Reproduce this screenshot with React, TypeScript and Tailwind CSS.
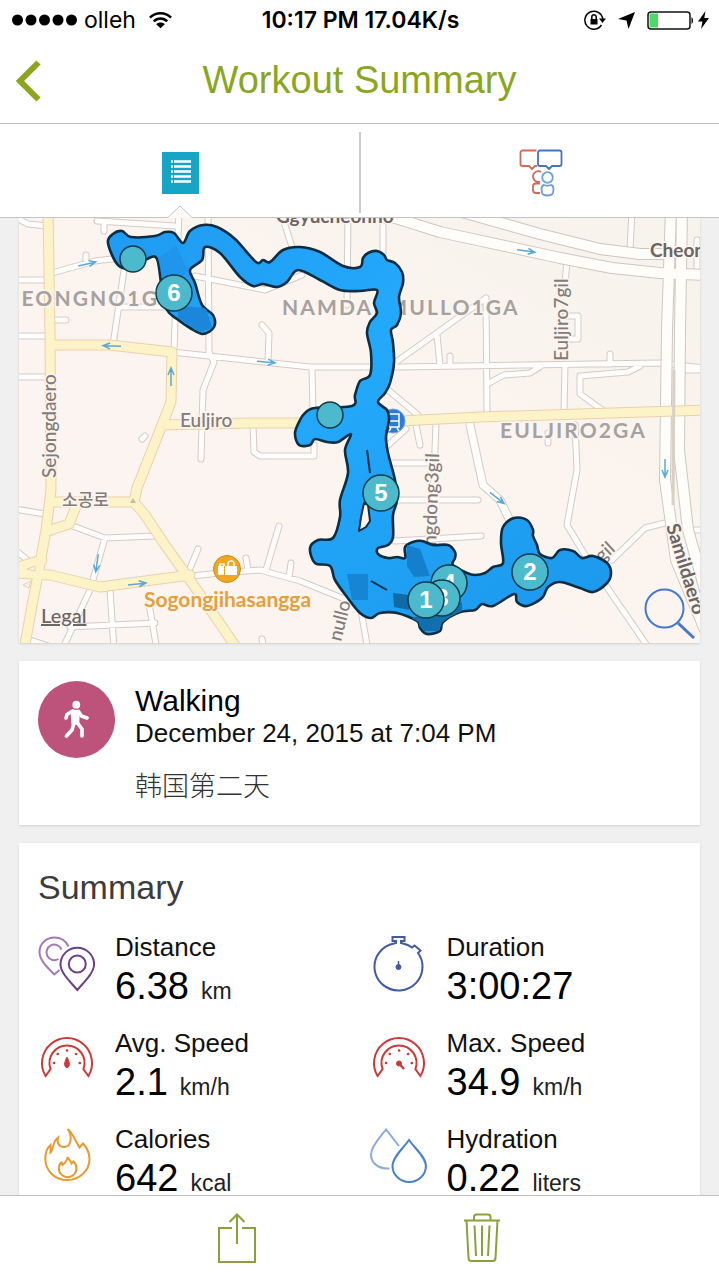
import React from 'react';

type Point = [number, number];

// Closed Catmull-Rom curve through every point
function closedCurve(pts: Point[]) {
  const n = pts.length;
  let d = `M${pts[0][0]} ${pts[0][1]}`;
  for (let i = 0; i < n; i++) {
    const a = pts[(i - 1 + n) % n];
    const b = pts[i];
    const c = pts[(i + 1) % n];
    const e = pts[(i + 2) % n];
    d += `C${b[0] + (c[0] - a[0]) / 6} ${b[1] + (c[1] - a[1]) / 6} ${c[0] - (e[0] - b[0]) / 6} ${c[1] - (e[1] - b[1]) / 6} ${c[0]} ${c[1]}`;
  }
  return d + 'Z';
}

const route: Point[] = [
  [108, 243], [113, 234], [122, 231], [131, 237], [155, 236], [165, 232], [174, 233], [183, 243], [190, 231], [203, 225],
  [217, 227], [235, 239], [256, 262], [263, 260], [270, 262], [283, 250], [300, 247], [320, 252], [343, 266], [360, 267],
  [363, 258], [368, 253], [377, 251], [384, 255], [387, 260], [395, 263], [402, 272], [403, 283], [399, 297], [401, 313],
  [397, 325], [391, 330], [393, 343], [394, 363], [390, 383], [385, 393], [378, 402], [387, 410], [389, 420], [386, 437],
  [388, 453], [395, 480], [397, 500], [393, 515], [393, 537], [388, 545], [378, 548], [378, 554], [388, 558], [397, 557],
  [405, 558], [405, 547], [413, 542], [422, 541], [433, 545], [448, 545], [455, 552], [455, 558], [453, 565], [467, 573],
  [475, 575], [485, 573], [493, 567], [503, 563], [501, 543], [503, 527], [514, 518], [527, 520], [533, 530], [533, 536],
  [537, 545], [540, 554], [552, 558], [560, 550], [573, 551], [582, 558], [593, 556], [607, 563], [611, 573], [607, 583],
  [593, 592], [580, 588], [560, 582], [548, 587], [542, 598], [527, 606], [517, 602], [514, 594], [493, 606], [482, 604],
  [475, 610], [460, 612], [443, 622], [440, 631], [427, 634], [420, 628], [417, 621], [397, 613], [380, 613], [371, 618],
  [360, 613], [347, 597], [335, 580], [330, 566], [315, 563], [310, 548], [318, 540], [333, 538], [340, 517], [340, 500],
  [348, 473], [345, 450], [351, 434], [338, 442], [327, 442], [315, 439], [310, 445], [299, 445], [295, 433], [300, 420],
  [305, 413], [315, 408], [352, 406], [355, 395], [360, 381], [370, 375], [371, 353], [367, 333], [370, 322], [377, 313],
  [374, 303], [377, 290], [360, 291], [340, 290], [320, 280], [298, 270], [287, 282], [277, 287], [263, 284], [253, 286],
  [240, 277], [220, 253], [205, 247], [202, 260], [190, 270], [195, 283], [202, 305], [213, 315], [214, 327], [203, 334],
  [190, 328], [177, 319], [167, 310], [162, 290], [157, 259], [147, 259], [133, 268], [118, 265],
];

const yellowRoads = [
  'M48 210L50 330L51 490L46 530L38 575L33 600L24 650',
  'M50 345H110L172 352',
  'M172 352L171 402L160 430L137 488L134 502L145 515L165 545L190 580L238 650',
  'M162 425L250 423H360L480 417L705 410',
  'M51 502H132',
  'M77 504L69 524L48 531',
  'M15 573L50 575L100 587L190 575',
  'M15 568L42 560',
];

const wideRoads = [
  'M370 210L440 232L560 258L612 268L660 273L705 275',
  'M455 210L540 234L600 249L640 254H668',
  'M671 210L667 330L665 480L676 560L705 630',
  'M682 210L680 330L679 450L688 530L705 590',
];

const midStreets = ['M470 425L483 485L500 500L512 525'];

const streets = [
  'M15 280H48', 'M15 336H50', 'M15 377H50', 'M15 217L28 224L48 226', 'M52 320H66',
  'M52 273L95 261L120 258', 'M86 260V255', 'M97 221L175 226', 'M104 224V231', 'M124 270L113 345', 'M120 307H165',
  'M179 210L174 352', 'M208 210L209 352L214 362L203 390L201 459', 'M172 352L310 367L400 367L660 363L705 368',
  'M195 276L265 290L302 275', 'M262 325L269 333L268 362', 'M312 369L313 412', 'M348 210L347 305',
  'M383 226V255', 'M284 222L293 250', 'M632 210L630 250', 'M396 362L486 298', 'M486 298L487 412', 'M437 335L440 365',
  'M450 364V356', 'M565 365L564 412', 'M567 260L565 284', 'M610 364V354', 'M489 383L504 375L530 373L541 366',
  'M640 366L628 372L580 376V394L605 412', 'M388 390L418 415', 'M565 316H578V339H567', 'M683 370H705', 'M697 240V275',
  'M386 447L406 429', 'M416 425L420 445', 'M436 425L431 545', 'M393 463H428', 'M398 500H478', 'M395 541L481 536',
  'M548 433V443', 'M575 425L577 470L567 525L585 555L650 650', 'M612 560L645 528L665 523', 'M686 530H705',
  'M15 509L45 514', 'M70 525L105 538L155 536', 'M105 538L90 590L62 650', 'M70 627L155 623', 'M110 590L114 650',
  'M149 604L157 650', 'M192 576L220 573L260 570L300 581L352 602', 'M188 573L198 549', 'M266 570L279 526',
  'M248 570L246 558', 'M289 578L291 563', 'M253 425L254 452L260 456H314V445', 'M264 650L262 639',
  'M360 605L368 650', 'M15 550L30 562', 'M24 638L60 650', 'M142 439L145 436',
];

const arrows = [
  { x: 87, y: 264, deg: -13 }, { x: 112, y: 346, deg: 182 }, { x: 171, y: 377, deg: -90 }, { x: 266, y: 362, deg: 5 },
  { x: 526, y: 251, deg: 8 }, { x: 97, y: 563, deg: 98 }, { x: 137, y: 584, deg: -6 }, { x: 497, y: 498, deg: 38 },
  { x: 665, y: 468, deg: 90 },
];

function Roads({ paths, width, line, fill }: { paths: string[]; width: number; line: string; fill: string }) {
  const d = paths.join('');
  return (
    <g fill="none" strokeLinecap="round" strokeLinejoin="round">
      <path d={d} stroke={line} strokeWidth={width + 2} />
      <path d={d} stroke={fill} strokeWidth={width} />
    </g>
  );
}

function Marker({ x, y, label }: { x: number; y: number; label?: string }) {
  return (
    <g>
      <circle cx={x} cy={y} r={label ? 18 : 13} fill="#4cb9cd" stroke="#123c49" strokeWidth="1.5" />
      {label && (
        <text x={x} y={y + 8} textAnchor="middle" fill="#fff" className="font-['Liberation_Sans',sans-serif] text-[24px] font-bold">
          {label}
        </text>
      )}
    </g>
  );
}

function RouteMap() {
  const outline = closedCurve(route);
  return (
    <svg viewBox="19 218 681 425" className="block w-full h-auto" role="img" aria-label="Route map">
      <defs>
        <linearGradient id="land" x1="0" y1="1" x2="1" y2="0">
          <stop offset="0" stopColor="#fcf4f0" />
          <stop offset="0.6" stopColor="#fbf4ef" />
          <stop offset="1" stopColor="#f6f3ec" />
        </linearGradient>
        <linearGradient id="route" x1="0" y1="0" x2="1" y2="1">
          <stop offset="0" stopColor="#1f9bf2" />
          <stop offset="0.4" stopColor="#23a9fb" />
          <stop offset="1" stopColor="#1b98ec" />
        </linearGradient>
        <clipPath id="routeClip">
          <path d={outline} />
        </clipPath>
      </defs>
      <rect x="19" y="218" width="681" height="425" fill="url(#land)" />

      <Roads paths={streets} width={5} line="#d3cbc7" fill="#fffdfb" />
      <Roads paths={midStreets} width={7} line="#d3cbc7" fill="#fffdfb" />
      <Roads paths={wideRoads} width={10} line="#cdc7c1" fill="#fffdf9" />
      <Roads paths={yellowRoads} width={9} line="#ecd0ab" fill="#fdf3c8" />
      <path d="M674 370L673 505" stroke="#d8cfc6" strokeWidth="3" />
      <path d="M130 503L133 498L136 503Z" fill="#c9bd9e" />
      <path d="M27 569L35 566V571ZM23 585L31 581L29 588Z" fill="#fcf4ef" stroke="#ecd0ab" />

      <g stroke="#58a9d6" strokeWidth="1.5" fill="none">
        {arrows.map((a) => (
          <path key={`${a.x}-${a.y}`} d="M-9 0H8M2 -3L9 0L2 3" transform={`translate(${a.x} ${a.y}) rotate(${a.deg})`} />
        ))}
      </g>

      <g className="font-[Lato,sans-serif] text-[21px] font-bold tracking-widest" fill="#a5a1a0" stroke="#fbf4ef" strokeWidth="3" paintOrder="stroke">
        <text x="159" y="306" textAnchor="end">EONGNO1G</text>
        <text x="282" y="315">NAMDAEMULLO1GA</text>
        <text x="500" y="438">EULJIRO2GA</text>
      </g>
      <g className="font-[Lato,sans-serif] text-[19px] font-medium" fill="#817b79" stroke="#fbf4ef" strokeWidth="3" paintOrder="stroke">
        <text x="180" y="427">Euljiro</text>
        <text transform="translate(56 478) rotate(-90)">Sejongdaero</text>
        <text transform="translate(568 361) rotate(-90)">Euljiro7gil</text>
        <text transform="translate(436 546) rotate(-88)">ngdong3gil</text>
        <text transform="translate(341 642) rotate(-76)">nullo</text>
        <text transform="translate(602 563) rotate(-42)">gil</text>
        <text x="62" y="506" className="font-['Noto_Sans_CJK_KR',sans-serif] text-[17px]">소공로</text>
      </g>
      <g className="font-[Lato,sans-serif] text-[19px] font-bold" fill="#6b6564" stroke="#fbf4ef" strokeWidth="3" paintOrder="stroke">
        <text x="276" y="223">Ggyucheonno</text>
        <text x="650" y="257">Cheonggye</text>
        <text transform="translate(666 526) rotate(73)">Samildaero</text>
        <text x="144" y="607" fill="#e5a03a" className="text-[21px]">Sogongjihasangga</text>
      </g>

      <circle cx="227" cy="569" r="13.5" fill="#f0a822" stroke="#c98b1c" />
      <path d="M218 566h6v9h-5l-1-1zM225 566h12v9h-12z" fill="#fff" />
      <path d="M228 567v-3a3 3 0 0 1 6 0v3M220 566v-2h4v2" fill="none" stroke="#fff" strokeWidth="1.5" />
      <circle cx="393" cy="421" r="12" fill="#2a7bdc" stroke="#6ea5e6" />
      <path d="M389 414h10v13h-10zM391 428l-2 3M397 428l2 3M389 421h10" fill="none" stroke="#fff" strokeWidth="1.5" />

      <path d={outline} fill="url(#route)" stroke="#0d2d42" strokeWidth="2.6" strokeLinejoin="round" />
      <g clipPath="url(#routeClip)">
        <path d="M407 545L420 549L430 576L414 577L407 566Z" fill="#1480cd" />
        <path d="M347 574H368V600H352Z" fill="#1685d4" />
        <path d="M393 593L409 595V610L394 607Z" fill="#0f6ba8" />
        <path d="M412 618L462 602V613L443 622L438 631H424Z" fill="#126fae" />
        <path d="M158 258L176 246L188 270L176 285L164 290Z" fill="#1d8be2" opacity="0.5" />
        <path d="M178 306L206 308L212 328L200 332L178 318Z" fill="#1c86da" />
      </g>
      <path d="M370 473L367 450M371 581L387 590" fill="none" stroke="#0d2d42" strokeWidth="2" />
      <path d="M364 503L368 505L370 521L366 527L359 531L361 517Z" fill="#fbf4ef" stroke="#0d2d42" strokeWidth="2" strokeLinejoin="round" />

      <Marker x={133} y={259} />
      <Marker x={330} y={415} />
      <Marker x={174} y={293} label="6" />
      <Marker x={381} y={493} label="5" />
      <Marker x={530} y={572} label="2" />
      <Marker x={449} y={583} label="4" />
      <Marker x={442} y={598} label="3" />
      <Marker x={426} y={600} label="1" />
    </svg>
  );
}

function StatusBar() {
  return (
    <div className="flex h-10 items-center justify-between px-3 font-[Inter,sans-serif] text-[23px] text-black">
      <div className="flex flex-1 items-center">
        <svg width="66" height="12" viewBox="0 0 66 12">
          {[5.5, 19, 32.5, 46, 59.5].map((cx) => (
            <circle key={cx} cx={cx} cy="6" r="5.5" />
          ))}
        </svg>
        <span className="ml-1.5">olleh</span>
        <svg className="ml-3" width="25" height="18" viewBox="0 0 26 18" fill="none" stroke="#000" strokeWidth="2.6">
          <path d="M2 6.5C8 .5 18 .5 24 6.5M6 10.5C10 6.5 16 6.5 20 10.5" />
          <path d="M8.500 13.300C11 11.200 15 11.200 17.500 13.300L13 17.500Z" fill="#000" stroke="none" />
        </svg>
      </div>
      <div className="font-semibold">10:17 PM 17.04K/s</div>
      <div className="flex flex-1 items-center justify-end gap-3 -mr-0.5">
        <svg width="22" height="20" viewBox="0 0 22 20" fill="none" stroke="#000" strokeWidth="1.5">
          <path d="M17.5 15A9 9 0 1 1 18.8 9" />
          <path d="M15 8.5H22L18.5 13Z" fill="#000" stroke="none" />
          <path d="M6.5 9H13.5V14.5H6.5Z" fill="#000" stroke="none" />
          <path d="M7.8 9.5V7a2.2 2.2 0 0 1 4.4 0V9.5" />
        </svg>
        <svg width="17" height="17" viewBox="0 0 17 17">
          <path d="M17 0L10.5 17L8.5 8.5L0 7Z" />
        </svg>
        <div className="flex items-center gap-1">
          <svg width="47" height="19" viewBox="0 0 47 19">
            <rect x="1" y="1" width="42" height="17" rx="3" fill="#fff" stroke="#111" strokeWidth="1.5" />
            <path d="M2.5 2.5H11V16.5H2.5Z" fill="#4cd964" />
            <path d="M44.5 6a3 4 0 0 1 0 7Z" />
          </svg>
          <svg width="11" height="18" viewBox="0 0 11 18">
            <path d="M7.5 0L0 10.5H4.5L3 18L11 7H6.3Z" />
          </svg>
        </div>
      </div>
    </div>
  );
}

function Header() {
  return (
    <header className="relative flex h-[84px] items-center justify-center border-b border-[#b9bcbd] pb-1">
      <button type="button" aria-label="Back" className="absolute left-4 top-5">
        <svg width="26" height="42" viewBox="0 0 26 42" fill="none" stroke="#8aa61f" strokeWidth="6">
          <path d="M22.5 2.5L4 21L22.5 39.5" />
        </svg>
      </button>
      <h1 className="text-[38px] leading-[44px] text-[#8aa61f]">Workout Summary</h1>
    </header>
  );
}

function Tabs() {
  return (
    <nav className="relative z-10 flex h-[94px] items-stretch border-b border-[#c4c6c6] bg-white">
      <button type="button" aria-label="Details" className="flex flex-1 items-center justify-center pt-1 pl-0.5">
        <svg width="37" height="42" viewBox="0 0 37 42">
          <path d="M0 0H37V42H0Z" fill="#16a5c6" />
          <path d="M9 9.5H11M9 14.5H11M9 19.5H11M9 24.5H11M9 29.5H11M12 9.5H29M12 14.5H29M12 19.5H29M12 24.5H29M12 29.5H29" stroke="#fff" strokeWidth="2.5" />
        </svg>
      </button>
      <span className="mt-2 mb-1 w-0.5 bg-[#c9cacc]" />
      <button type="button" aria-label="Social" className="flex flex-1 items-center justify-center pt-1 pl-0.5">
        <svg width="44" height="48" viewBox="0 0 44 48" fill="none" strokeWidth="1.8" strokeLinejoin="round">
          <g stroke="#cf6b5c">
            <path d="M17.5 1.5H3.5a2 2 0 0 0-2 2V15a2 2 0 0 0 2 2H10l3 3 3-3H18" />
            <path d="M22 23a5.300 5.300 0 1 0-1 9.500M21 34.500H17a3 3 0 0 0-3 3V41a3 3 0 0 0 3 3h4" />
          </g>
          <path d="M21 1.5H40.5a2 2 0 0 1 2 2V15a2 2 0 0 1-2 2H33l-3 3-3-3H21a2 2 0 0 1-2-2V3.5a2 2 0 0 1 2-2Z" stroke="#4672c4" />
          <g stroke="#6f9fe0">
            <circle cx="28.5" cy="28.5" r="5.3" />
            <path d="M25 36Q28.500 37.500 32 36Q34.500 36.500 34.500 40L34 43.500Q33.500 46.500 28.500 46.500Q23.500 46.500 23 43.500L22.500 40Q22.500 36.500 25 36Z" />
          </g>
        </svg>
      </button>
      {/* Pointer under the active tab */}
      <svg className="absolute -bottom-px left-1/4 -translate-x-1/2" width="26" height="13" viewBox="0 0 26 13">
        <path d="M0 13L13 1L26 13Z" fill="#fdf9f7" />
        <path d="M0 12.5H1L13 1L25 12.5H26" fill="none" stroke="#c4c6c6" />
      </svg>
    </nav>
  );
}

const icons: Record<string, React.ReactNode> = {
  distance: (
    <>
      <path d="M30.5 11.5C28 6 23 2.5 16.3 2.5C8 2.5 1.5 9 1.5 17C1.5 25 9 32 16.3 39.5L21.5 35" stroke="#a27bb6" />
      <path d="M23.5 14.5A7.8 7.8 0 1 0 20.5 24" stroke="#a27bb6" />
      <path d="M39.3 55C33 47.5 22.5 38 22.5 29.5a16.8 16.8 0 0 1 33.6 0C56.1 38 45.5 47.5 39.3 55Z" stroke="#6e3f8c" />
      <circle cx="39.3" cy="29" r="8.5" stroke="#6e3f8c" />
    </>
  ),
  duration: (
    <g stroke="#4259a3">
      <path d="M24 8.5L26 8V6H22.5V2H34.5V6H31V8L33 8.5Q38 9.5 42 12.500L44.500 10.500L50.500 15.500L48 18Q52.500 24 52.500 31.500A24 23.700 0 1 1 24 8.500" />
      <circle cx="28.5" cy="32" r="2.5" fill="#4259a3" strokeWidth="1" />
      <path d="M28.5 32V26" strokeWidth="1.5" />
    </g>
  ),
  avg: (
    <g stroke="#cc3a38">
      <path d="M7.6 45A25 25 0 1 1 50.4 45L45.4 38A17.5 17.5 0 1 0 12.6 38Z" />
      <path d="M16 32h.1M19.7 23h.1M29 19.5h.1M38 23h.1M41.7 32h.1" strokeWidth="2.6" strokeLinecap="round" />
      <path d="M28.5 26.5h1L31 31a2.5 3.5 0 1 1-4 0Z" fill="#cc3a38" strokeWidth="1" />
    </g>
  ),
  max: (
    <g stroke="#cc3a38">
      <path d="M7.6 45A25 25 0 1 1 50.4 45L45.4 38A17.5 17.5 0 1 0 12.6 38Z" />
      <path d="M16 32h.1M19.7 23h.1M29 19.5h.1M38 23h.1M41.7 32h.1" strokeWidth="2.6" strokeLinecap="round" />
      <circle cx="29" cy="32.5" r="2.5" fill="#cc3a38" strokeWidth="1" />
      <path d="M29 32.5L34 38" strokeWidth="2.5" />
    </g>
  ),
  calories: (
    <g stroke="#e99a30">
      <path d="M29.7 2C34 5 37 13 41.5 20.5L45 16.5C49 21 51.5 26 51.5 32C51.5 44 41 53 29.3 53C17 53 7.3 44 7.3 31.5C7.3 26 9 21 12.5 18V25.5C16 22 14 15 20 10.5C18.5 16 21 20 26 20C33.5 20 34.5 9 29.7 2Z" />
      <path d="M29.5 30C30.5 32.5 33 34 33.5 36.5L35.5 34.5C38 37 38.5 39 38.3 41a8.7 8.3 0 1 1-17.3 0c0-3 1.5-5 2.5-5.5l1 2.5C27 36 29.5 34 29.5 30Z" />
    </g>
  ),
  hydration: (
    <>
      <path d="M29 19L16 2.5C11 9 1 19 1 27.5C1 36 8 42 19.5 41.5" stroke="#8fabdc" />
      <path d="M39 13C34 20.5 22.5 30 22.5 39a16.7 16 0 0 0 33.4 0C56 30 44 20.5 39 13Z" stroke="#4a80cd" />
    </>
  ),
};

const stats = [
  { icon: 'distance', label: 'Distance', value: '6.38', unit: 'km' },
  { icon: 'duration', label: 'Duration', value: '3:00:27' },
  { icon: 'avg', label: 'Avg. Speed', value: '2.1', unit: 'km/h' },
  { icon: 'max', label: 'Max. Speed', value: '34.9', unit: 'km/h' },
  { icon: 'calories', label: 'Calories', value: '642', unit: 'kcal' },
  { icon: 'hydration', label: 'Hydration', value: '0.22', unit: 'liters' },
];

export default function App() {
  return (
    <div className="flex h-screen flex-col bg-white font-['Liberation_Sans','Noto_Sans_CJK_SC',sans-serif] text-[#111]">
      <StatusBar />
      <Header />
      <Tabs />

      <main className="min-h-0 flex-1 space-y-[18px] overflow-y-auto bg-[#f1f0f1] px-[19px] [scrollbar-width:none]">
        <section className="relative overflow-hidden shadow-sm">
          <RouteMap />
          <a href="#legal" className="absolute bottom-4 left-[22px] font-[Lato,sans-serif] text-[20px] leading-6 font-medium text-[#6b6564] underline">Legal</a>
          <button type="button" aria-label="Zoom map" className="absolute right-1 bottom-1">
            <svg width="52" height="52" viewBox="0 0 52 52" fill="none" stroke="#4577d2" strokeWidth="2">
              <circle cx="20.5" cy="21.5" r="19" />
              <path d="M34 36L50 51" strokeWidth="3" />
            </svg>
          </button>
        </section>

        <section className="flex gap-5 bg-white px-[19px] pt-5 pb-[22px] shadow-sm">
          <svg className="shrink-0" width="77" height="77" viewBox="0 0 77 77">
            <circle cx="38.5" cy="38.5" r="38.5" fill="#bd527a" />
            <circle cx="38.3" cy="23.7" r="3.9" fill="#fff" />
            <g fill="none" stroke="#fff" strokeWidth="3.6" strokeLinecap="round" strokeLinejoin="round">
              <path d="M34.5 30L29 33.5L28 37M40.5 30.500L43.500 35L49 37M36 42L34 49L28.500 55M39.500 42L44 48V55" />
              <path d="M34.5 30.5H40L39.5 42H35Z" fill="#fff" />
            </g>
          </svg>
          <div className="pt-1">
            <h2 className="text-[30px] leading-8 text-black">Walking</h2>
            <p className="text-[26px] leading-8">December 24, 2015 at 7:04 PM</p>
            <p className="mt-[22px] text-[27px] leading-8 font-light text-[#333]">韩国第二天</p>
          </div>
        </section>

        <section className="bg-white px-[19px] pt-6 pb-5 shadow-sm">
          <h2 className="text-[34px] leading-10 text-[#3c3c3c]">Summary</h2>
          <dl className="mt-6 grid grid-cols-2 gap-x-5 gap-y-[18px]">
            {stats.map((s) => (
              <div key={s.label} className="flex gap-5">
                <svg className="mt-1 shrink-0" width="57" height="57" viewBox="0 0 57 57" fill="none" strokeWidth="2">
                  {icons[s.icon]}
                </svg>
                <div>
                  <dt className="text-[26px] leading-8">{s.label}</dt>
                  <dd className="flex h-[46px] items-baseline gap-3 text-[38px] leading-[46px] text-black">
                    {s.value}
                    {s.unit && <span className="text-[23px] leading-none text-[#222]">{s.unit}</span>}
                  </dd>
                </div>
              </div>
            ))}
          </dl>
        </section>
      </main>

      <footer className="h-[85px] border-t border-[#bfc0c2] bg-white">
        <div className="mx-auto grid h-full w-[68%] grid-cols-2 place-items-center">
          <button type="button" aria-label="Share">
            <svg width="38" height="50" viewBox="0 0 38 50" fill="none" stroke="#8aa03a" strokeWidth="2">
              <path d="M14 15H1V49H37V15H24M19 1.5V31M11.5 9L19 1.5L26.5 9" />
            </svg>
          </button>
          <button type="button" aria-label="Delete">
            <svg width="36" height="50" viewBox="0 0 36 50" fill="none" stroke="#8aa03a" strokeWidth="2" strokeLinejoin="round">
              <path d="M0 7.5H36M10 7.5V4a2.5 2.5 0 0 1 2.5-2.5H24A2.5 2.5 0 0 1 26.5 4V7.5M2.5 7.5L4.5 45a3 3 0 0 0 3 3H28.5a3 3 0 0 0 3-3L33.5 7.5" />
              <path d="M10.5 12.5L12 43M18 12.5V43M25.5 12.5L24 43" />
            </svg>
          </button>
        </div>
      </footer>
    </div>
  );
}
